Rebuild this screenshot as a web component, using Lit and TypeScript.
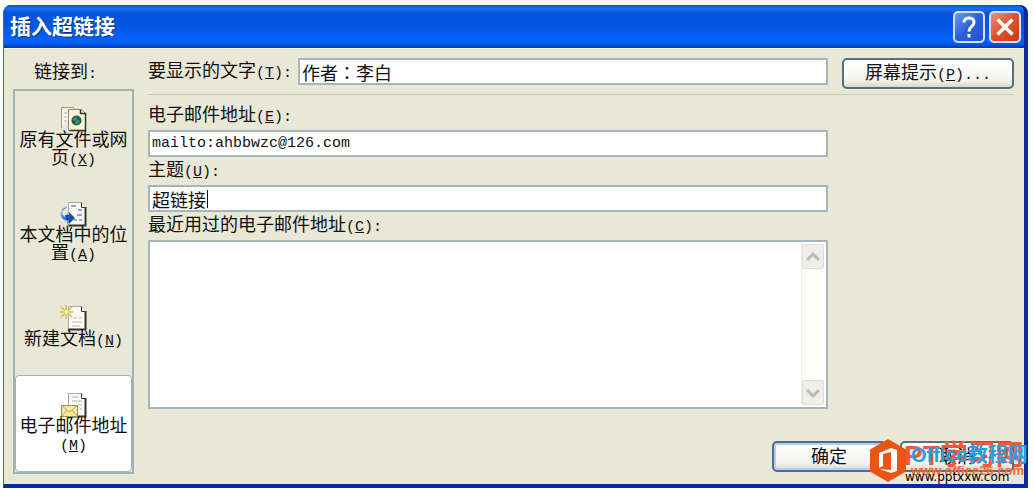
import { LitElement, html, css, svg } from "lit";
import { customElement, state } from "lit/decorators.js";

const page = svg`
  <path d="M8.5 1.5h13l4 5v18h-17z" fill="#fafaf6" stroke="#a9a99c"/>
  <path d="M21.5 1.5v5h4" fill="#fff" stroke="#33332c"/>
  <path d="M25.5 6v18.500h-17" fill="none" stroke="#33332c" stroke-width="2"/>`;

const icons: Record<string, unknown> = {
  file: svg`
    <path d="M1.500 22.500v-21h12l2 3" fill="#f4f4ee" stroke="#97978c"/>
    <path d="M4 7h3M4 11h3M4 15h3" stroke="#b5b5ab"/>
    <path d="M8.500 3.500h13l4 4v17h-17z" fill="#fbf3cf" stroke="#8e8b72"/>
    <path d="M20.500 3.500v4h5v17h-16" fill="none" stroke="#33332c" stroke-width="1.500"/>
    <circle cx="16.500" cy="14.500" r="5" fill="#17605c"/>
    <path d="M13 13l3-2 1 3 3 1-2 3-3-1z" fill="#479a62"/>
    <path d="M14 17l2-3" stroke="#143b80"/>`,
  place: svg`${page}
    <path d="M11 5h5M18 9h4M17 14h5M14 19h3M19 19h3" stroke="#7b88b9" stroke-width="1.500"/>
    <path d="M7 6Q1 6 2 12q1 4 5 4v-4l6 6-6 5v-3Q0 19 1 11" fill="#3f82d4" stroke="#9cc4ee"/>
    <path d="M5 14h4v-3l6 6-6 6v-4H6z" fill="#1c4fa3"/>`,
  fresh: svg`${page}
    <path d="M13 13h4M19 13h3M12 17h10M12 21h8" stroke="#bdbdb4"/>
    <path d="M6 0v14M0 7h13M1 2l11 10M12 2L1 12" stroke="#d8bd46" stroke-width="1.500"/>
    <circle cx="6.500" cy="7" r="2" fill="#fff6a0"/>`,
  mail: svg`${page}
    <path d="M12 5h7M12 9h10M18 13h4M20 17h2" stroke="#b9b9b0"/>
    <path d="M1.500 13.500h16v11h-16z" fill="#f7e9a5" stroke="#9c8f55"/>
    <path d="M2 14l7.500 6L17 14M2 24l5-6M17 24l-5-6" fill="none" stroke="#b3a25a"/>`,
};

const destinations = [
  { id: "file", text: "原有文件或网页", key: "X" },
  { id: "place", text: "本文档中的位置", key: "A" },
  { id: "fresh", text: "新建文档", key: "N" },
  { id: "mail", text: "电子邮件地址", key: "M" },
];

const access = (key: string, tail = "") =>
  html`<span class="latin">(<u>${key}</u>)${tail}</span>`;

@customElement("app-root")
export class AppRoot extends LitElement {
  @state() private selected = "mail";

  static styles = css`
    :host {
      display: block;
      font-family: "Liberation Mono", "Noto Sans CJK SC", sans-serif;
      font-size: 18px;
      line-height: 18px;
      color: #111;
    }
    * { box-sizing: border-box; }
    button, input { font: inherit; color: inherit; margin: 0; }
    .screen { background: #fdfdfe; padding: 5px 6px 1px 3px; }
    .dialog {
      position: relative;
      border: solid #0b2a9c;
      border-width: 0 4px 4px 1px;
      border-left-color: #4a67a8;
      border-radius: 8px 8px 0 0;
      background: #0b2a9c;
    }
    .title {
      display: flex;
      align-items: center;
      gap: 4px;
      height: 43px;
      padding: 0 3px 0 6px;
      border-radius: 7px 7px 0 0;
      background: linear-gradient(#0a4fbd 0, #1a70ee 3px, #0553dd 9px, #0356e2 20px, #0562fb 34px, #0460f4 38px, #0539ae 43px);
    }
    h1 {
      flex: 1;
      margin: 0;
      padding-top: 4px;
      font-size: 21px;
      line-height: 24px;
      font-weight: 700;
      color: #fff;
      text-shadow: 1px 1px 1px #0a2f86;
    }
    .cap {
      width: 32px;
      height: 32px;
      padding: 0;
      border: 2px solid #d5e2fb;
      border-radius: 5px;
      background: linear-gradient(135deg, #6f9bf0, #2a5fdc 50%, #2456cc);
    }
    .cap.close { background: linear-gradient(135deg, #ee9278, #e0502c 50%, #c93c17); }
    .cap svg { display: block; width: 28px; height: 28px; }
    .body {
      display: flex;
      gap: 14px;
      padding: 9px 10px 10px 9px;
      background: #e9e7d5;
      border-top: 1px solid #f8f6e8;
    }
    .side { width: 121px; display: flex; flex-direction: column; }
    .side h2 {
      margin: 0 0 4px;
      padding: 6px 0 1px 21px;
      font-size: 18px;
      font-weight: 400;
      line-height: 18px;
    }
    .list {
      flex: 1;
      display: flex;
      flex-direction: column;
      border: 2px solid #9fb3b5;
    }
    .dest {
      display: flex;
      flex-direction: column;
      align-items: center;
      flex: 1 1 0;
      justify-content: center;
      padding: 0;
      border: 0;
      background: none;
      line-height: 18px;
    }
    .dest.on {
      border: 1px solid #9fb3b5;
      border-radius: 4px;
      background: #fff;
    }
    .dest svg { width: 28px; height: 26px; flex: none; }
    .latin { font-size: 15px; }
    .main { flex: 1; display: flex; flex-direction: column; min-width: 0; }
    .top {
      display: flex;
      gap: 14px;
      padding-bottom: 5px;
      border-bottom: 1px solid #cbcab9;
      align-items: flex-start;
    }
    .shown { flex: 1; display: flex; align-items: center; gap: 6px; }
    input {
      width: 100%;
      min-width: 0;
      height: 27px;
      padding: 0 2px;
      border: 2px solid #a5b6bc;
      border-radius: 0;
      background: #fff;
      outline: none;
    }
    #shown { font-family: "Noto Sans CJK TC", sans-serif; }
    input.address { font-size: 15px; }
    #subject:not(:focus) {
      background: linear-gradient(#111, #111) 57px 50% / 1px 18px no-repeat #fff;
    }
    .shown label { white-space: nowrap; padding-top: 3px; }
    .push {
      height: 31px;
      padding: 3px 0 0;
      border: 2px solid #54717f;
      border-radius: 5px;
      background: linear-gradient(#fff, #f4f4ee 75%, #d9d7ca);
    }
    .push.tip { width: 172px; }
    .push.ok, .push.cancel { width: 114px; }
    .push.ok { border-color: #4b6f92; box-shadow: inset 0 0 0 2px #b9cdec; }
    .fields {
      display: flex;
      flex-direction: column;
      margin-right: 186px;
      padding-top: 7px;
    }
    .fields label, .fields .caption { height: 28px; line-height: 28px; }
    .recent {
      display: flex;
      justify-content: flex-end;
      height: 169px;
      padding: 2px;
      border: 2px solid #a5b6bc;
      background: #fff;
    }
    .bar {
      width: 23px;
      display: flex;
      flex-direction: column;
      justify-content: space-between;
      border-left: 1px solid #f0f0ea;
      background: #fdfefb;
    }
    .bar button {
      height: 25px;
      padding: 0;
      border: 1px solid #dfded6;
      border-radius: 2px;
      background: #efeee7;
    }
    .bar svg { display: block; margin: auto; width: 16px; height: 12px; }
    .actions { display: flex; justify-content: flex-end; gap: 14px; margin: 32px 0 2px; }
    .mark {
      position: absolute;
      right: -4px;
      bottom: -1px;
      width: 158px;
      height: 46px;
      pointer-events: none;
      font-family: "Liberation Sans", "Noto Sans CJK SC", sans-serif;
      white-space: nowrap;
    }
    .mark span { position: absolute; }
    .mark svg { position: absolute; left: 0; top: 0; width: 36px; height: 43px; }
    .pt { left: 34px; top: 0; font-size: 28px; line-height: 34px; font-weight: 700; color: #f0583b; }
    .office { left: 41px; top: 4px; font-size: 20px; line-height: 24px; font-weight: 700; color: #2a9de0; }
    .site { left: 41px; top: 23px; font-size: 13px; line-height: 18px; font-weight: 700; color: #f06a35; }
    .url { left: 35px; top: 30px; font-family: "DejaVu Sans", sans-serif; font-size: 12px; line-height: 16px; color: #000; }
  `;

  render() {
    return html`
      <div class="screen">
        <section class="dialog" role="dialog" aria-labelledby="title">
          <header class="title">
            <h1 id="title">插入超链接</h1>
            <button class="cap" aria-label="帮助">
              <svg viewBox="0 0 28 28" fill="none" stroke="#fff" stroke-width="3">
                <path d="M9 9.500Q9 5 14 5t5 4.500c0 4-5 4-5 9M14 21v3.500" />
              </svg>
            </button>
            <button class="cap close" aria-label="关闭">
              <svg viewBox="0 0 28 28" stroke="#fff" stroke-width="3.500">
                <path d="M6.500 6.500l15 15M21.500 6.500l-15 15" />
              </svg>
            </button>
          </header>
          <div class="body">
            <nav class="side">
              <h2>链接到<span class="latin">:</span></h2>
              <div class="list">
                ${destinations.map(
                  (d) => html`<button
                    class="dest ${d.id === this.selected ? "on" : ""}"
                    @click=${() => (this.selected = d.id)}
                  >
                    <svg viewBox="0 0 28 26" fill="none">${icons[d.id]}</svg>
                    <span>${d.text}${access(d.key)}</span>
                  </button>`
                )}
              </div>
            </nav>
            <div class="main">
              <div class="top">
                <div class="shown">
                  <label for="shown">要显示的文字${access("T", ":")}</label>
                  <input id="shown" type="text" value="作者：李白" />
                </div>
                <button class="push tip">屏幕提示${access("P", "...")}</button>
              </div>
              <div class="fields">
                <label for="address">电子邮件地址${access("E", ":")}</label>
                <input class="address" id="address" type="text" value="mailto:ahbbwzc@126.com" />
                <label for="subject">主题${access("U", ":")}</label>
                <input id="subject" type="text" value="超链接" />
                <div class="caption" id="recent">最近用过的电子邮件地址${access("C", ":")}</div>
                <div class="recent" role="listbox" aria-labelledby="recent">
                  <div class="bar">
                    <button aria-label="向上滚动">
                      <svg viewBox="0 0 16 12" fill="none" stroke="#bdbcb2" stroke-width="3"><path d="M2 9l6-6 6 6" /></svg>
                    </button>
                    <button aria-label="向下滚动">
                      <svg viewBox="0 0 16 12" fill="none" stroke="#bdbcb2" stroke-width="3"><path d="M2 3l6 6 6-6" /></svg>
                    </button>
                  </div>
                </div>
              </div>
              <div class="actions">
                <button class="push ok">确定</button>
                <button class="push cancel">取消</button>
              </div>
            </div>
          </div>
          <div class="mark">
            <span class="pt">PT学习网</span>
            <span class="office">Office教程网</span>
            <span class="site">www.office26.com</span>
            <span class="url">www.pptxxw.com</span>
            <svg viewBox="0 0 36 43">
              <path d="M18 0l18 10.500v22L18 43 0 32.500v-22z" fill="#e95512" />
              <path d="M9 14l12-5 6 2v21l-6 2-12-4 12 1V13l-8 2v12l-4 2z" fill="#fff" />
            </svg>
          </div>
        </section>
      </div>
    `;
  }
}
